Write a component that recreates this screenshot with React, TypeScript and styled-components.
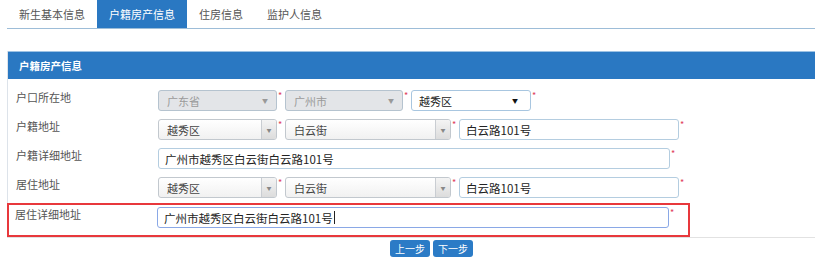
import styled, { createGlobalStyle } from 'styled-components';

const GlobalStyles = createGlobalStyle`
  body {
    margin: 0;
    background: #ffffff;
    font-family: "Noto Sans CJK SC", "Noto Sans", sans-serif;
    font-size: 12px;
    color: #333;
  }
`;

const Page = styled.div`
  width: 815px;
  height: 270px;
  overflow: hidden;
`;

const Tabs = styled.div`
  display: flex;
  height: 28px;
  margin-left: 7px;
  border-bottom: 1px solid #9dbdd8;
`;

const Tab = styled.div<{ $active?: boolean }>`
  display: flex;
  align-items: center;
  justify-content: center;
  padding: 0 12px;
  font-size: 11px;
  color: ${(p) => (p.$active ? '#fff' : '#555')};
  background: ${(p) => (p.$active ? '#2a78c2' : 'transparent')};
`;

const Panel = styled.div`
  margin: 22px 0 0 7px;
  border-left: 1px solid #dde3ea;
  border-bottom: 1px solid #e2e2e2;
`;

const PanelHeader = styled.div`
  height: 27px;
  background: #2a78c2;
  border-top: 1px solid #9cc2e4;
  color: #fff;
  font-size: 10.5px;
  font-weight: bold;
  display: flex;
  align-items: center;
  padding-left: 11px;
`;

const PanelBody = styled.div`
  padding-top: 6px;
  width: 683px;
`;

const Row = styled.div<{ $marked?: boolean }>`
  display: flex;
  align-items: flex-start;
  box-sizing: border-box;
  width: 683px;
  height: ${(p) => (p.$marked ? '34px' : '29px')};
  margin-top: ${(p) => (p.$marked ? '2px' : '0')};
  margin-left: ${(p) => (p.$marked ? '-1px' : '0')};
  padding-top: ${(p) => (p.$marked ? '2px' : '3px')};
  border: 2px solid ${(p) => (p.$marked ? '#e8383c' : 'transparent')};
  border-left-width: ${(p) => (p.$marked ? '2px' : '0')};
`;

const Label = styled.div<{ $shift?: boolean }>`
  width: ${(p) => (p.$shift ? '148px' : '150px')};
  padding-left: ${(p) => (p.$shift ? '6px' : '8px')};
  box-sizing: border-box;
  font-size: 11px;
  color: #555;
  line-height: 15px;
`;

const Fields = styled.div`
  display: flex;
  align-items: flex-start;
`;

const Star = styled.span`
  color: #e0405a;
  font-size: 9px;
  line-height: 9px;
  width: 7px;
  padding-left: 1px;
  margin-top: 1px;
`;

const Select = styled.div<{ $w: number; $disabled?: boolean }>`
  width: ${(p) => p.$w}px;
  height: 21px;
  box-sizing: border-box;
  border: 1px solid ${(p) => (p.$disabled ? '#b5c3cf' : '#c2c8ce')};
  border-radius: 3px;
  background: ${(p) => (p.$disabled ? '#e3e5e8' : 'linear-gradient(#ffffff, #f1f1f1)')};
  display: flex;
  align-items: center;
  font-size: 11px;
  color: ${(p) => (p.$disabled ? '#9a9a9a' : '#444')};
  padding-left: 8px;
`;

const SelectText = styled.span`
  flex: 1;
`;

const SmallArrow = styled.span<{ $dark?: boolean }>`
  font-size: 6px;
  color: ${(p) => (p.$dark ? '#111' : '#999')};
  margin-right: ${(p) => (p.$dark ? '12px' : '8px')};
`;

const ArrowButton = styled.span`
  width: 14px;
  height: 19px;
  border-left: 1px solid #c9cdd2;
  background: linear-gradient(#f4f4f4, #dcdcdc);
  display: flex;
  align-items: center;
  justify-content: center;
  font-size: 5px;
  color: #888;
  border-radius: 0 2px 2px 0;
`;

const NativeSelect = styled.div<{ $w: number }>`
  width: ${(p) => p.$w}px;
  height: 21px;
  box-sizing: border-box;
  border: 1px solid #a8c6e0;
  border-radius: 3px;
  background: #fff;
  display: flex;
  align-items: center;
  font-size: 11px;
  color: #222;
  padding-left: 7px;
`;

const Input = styled.div<{ $w: number; $focused?: boolean }>`
  width: ${(p) => p.$w}px;
  height: 21px;
  box-sizing: border-box;
  border: 1px solid ${(p) => (p.$focused ? '#8aa8e6' : '#b4cde0')};
  border-radius: 3px;
  background: #fff;
  display: flex;
  align-items: center;
  font-size: 11.5px;
  color: #222;
  padding-left: 6px;
`;

const Caret = styled.span`
  display: inline-block;
  width: 1px;
  height: 13px;
  background: #222;
  margin-left: 1px;
`;

const Actions = styled.div`
  display: flex;
  gap: 3px;
  padding: 2px 0 0 390px;
`;

const Button = styled.button`
  width: 40px;
  height: 17px;
  border: none;
  border-radius: 3px;
  background: #2b7bc6;
  color: #fff;
  font-family: inherit;
  font-size: 10px;
  padding: 0;
  line-height: 17px;
`;

function ComboSelect({ w, text }: { w: number; text: string }) {
  return (
    <Select $w={w}>
      <SelectText>{text}</SelectText>
      <ArrowButton>▼</ArrowButton>
    </Select>
  );
}

export default function App() {
  return (
    <Page>
      <GlobalStyles />
      <Tabs>
        <Tab>新生基本信息</Tab>
        <Tab $active>户籍房产信息</Tab>
        <Tab>住房信息</Tab>
        <Tab>监护人信息</Tab>
      </Tabs>
      <Panel>
        <PanelHeader>户籍房产信息</PanelHeader>
        <PanelBody>
          <Row>
            <Label>户口所在地</Label>
            <Fields>
              <Select $w={119} $disabled>
                <SelectText>广东省</SelectText>
                <SmallArrow>▼</SmallArrow>
              </Select>
              <Star>*</Star>
              <Select $w={118} $disabled>
                <SelectText>广州市</SelectText>
                <SmallArrow>▼</SmallArrow>
              </Select>
              <Star>*</Star>
              <NativeSelect $w={120}>
                <SelectText>越秀区</SelectText>
                <SmallArrow $dark>▼</SmallArrow>
              </NativeSelect>
              <Star>*</Star>
            </Fields>
          </Row>
          <Row>
            <Label>户籍地址</Label>
            <Fields>
              <ComboSelect w={119} text="越秀区" />
              <Star>*</Star>
              <ComboSelect w={166} text="白云街" />
              <Star>*</Star>
              <Input $w={220}>白云路101号</Input>
              <Star>*</Star>
            </Fields>
          </Row>
          <Row>
            <Label>户籍详细地址</Label>
            <Fields>
              <Input $w={512}>广州市越秀区白云街白云路101号</Input>
              <Star>*</Star>
            </Fields>
          </Row>
          <Row>
            <Label>居住地址</Label>
            <Fields>
              <ComboSelect w={119} text="越秀区" />
              <Star>*</Star>
              <ComboSelect w={166} text="白云街" />
              <Star>*</Star>
              <Input $w={220}>白云路101号</Input>
              <Star>*</Star>
            </Fields>
          </Row>
          <Row $marked>
            <Label $shift>居住详细地址</Label>
            <Fields>
              <Input $w={512} $focused>
                广州市越秀区白云街白云路101号
                <Caret />
              </Input>
              <Star>*</Star>
            </Fields>
          </Row>
        </PanelBody>
      </Panel>
      <Actions>
        <Button>上一步</Button>
        <Button>下一步</Button>
      </Actions>
    </Page>
  );
}
